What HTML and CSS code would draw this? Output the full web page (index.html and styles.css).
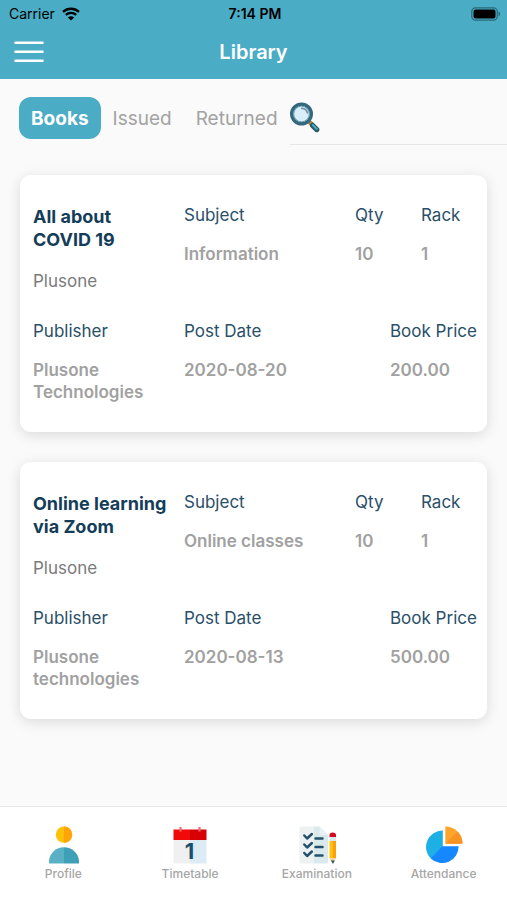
FILE: index.html
```html
<!DOCTYPE html>
<html lang="en">
<head>
<meta charset="utf-8">
<meta name="viewport" content="width=device-width, initial-scale=1">
<title>Library</title>
<link rel="stylesheet" href="styles.css">
</head>
<body>
<header class="header">
  <div class="status">
    <div class="carrier">
      <span>Carrier</span>
      <svg width="18" height="14" viewBox="0 0 18 14" aria-hidden="true">
        <path d="M1 4.8C5.6.7 12.4.7 17 4.8M3.8 7.9c3-2.6 7.4-2.6 10.4 0" fill="none" stroke="#000" stroke-width="2.3"/>
        <path d="M9 13.6 5.9 10.4c1.8-1.5 4.4-1.5 6.2 0z"/>
      </svg>
    </div>
    <span class="clock">7:14 PM</span>
    <svg class="battery" width="30" height="14" viewBox="0 0 30 14" aria-hidden="true">
      <rect x=".8" y=".8" width="25.4" height="12.4" rx="3.6" fill="none" stroke="#286a7a" stroke-width="1.2"/>
      <rect x="2.5" y="2.5" width="22" height="9" rx="2"/>
      <path d="M27.5 4.8c2.2.7 2.2 3.7 0 4.4z" fill="#286a7a"/>
    </svg>
  </div>
  <div class="navbar">
    <button class="menu" type="button" aria-label="Menu">
      <svg width="30" height="22" viewBox="0 0 30 22" aria-hidden="true">
        <path d="M1.5 1.8h27M1.5 10.8h27M1.5 19.8h27" stroke="#fff" stroke-width="2.6" stroke-linecap="round"/>
      </svg>
    </button>
    <h1 class="title">Library</h1>
  </div>
</header>

<main class="content">
  <div class="toolbar">
    <nav class="tabs">
      <button class="tab tab-active" type="button">Books</button>
      <button class="tab" type="button">Issued</button>
      <button class="tab" type="button">Returned</button>
    </nav>
    <div class="search">
      <label class="search-icon" for="search">
        <svg width="32" height="32" viewBox="0 0 32 32" aria-hidden="true">
          <path d="m19.5 21 3 3" stroke="#6b6460" stroke-width="4"/>
          <path d="m20 21.5 2.3 2.3" stroke="#d3892f" stroke-width="4"/>
          <path d="m22.5 24.3 4.3 4.3" stroke="#28596a" stroke-width="5.2" stroke-linecap="round"/>
          <path d="m22.8 24 4 4" stroke="#49a6b8" stroke-width="2" stroke-linecap="round"/>
          <circle cx="11.5" cy="13" r="9.8" fill="#d8eefa" stroke="#34687c" stroke-width="3.4"/>
          <circle cx="11.5" cy="13" r="7.8" fill="none" stroke="#6da0b2"/>
          <path d="M11.8 7.3c3 .2 5 2 5.6 4.6" fill="none" stroke="#7b94a5" stroke-width="1.8" stroke-linecap="round"/>
        </svg>
      </label>
      <input class="search-input" id="search" type="text" aria-label="Search books">
    </div>
  </div>

  <article class="card">
    <div class="row row-top">
      <div>
        <h2 class="book">All about COVID 19</h2>
        <p class="author">Plusone</p>
      </div>
      <dl class="field"><dt>Subject</dt><dd>Information</dd></dl>
      <dl class="field"><dt>Qty</dt><dd>10</dd></dl>
      <dl class="field"><dt>Rack</dt><dd>1</dd></dl>
    </div>
    <div class="row row-bottom">
      <dl class="field"><dt>Publisher</dt><dd>Plusone Technologies</dd></dl>
      <dl class="field"><dt>Post Date</dt><dd>2020-08-20</dd></dl>
      <dl class="field"><dt>Book Price</dt><dd>200.00</dd></dl>
    </div>
  </article>

  <article class="card">
    <div class="row row-top">
      <div>
        <h2 class="book">Online learning via Zoom</h2>
        <p class="author">Plusone</p>
      </div>
      <dl class="field"><dt>Subject</dt><dd>Online classes</dd></dl>
      <dl class="field"><dt>Qty</dt><dd>10</dd></dl>
      <dl class="field"><dt>Rack</dt><dd>1</dd></dl>
    </div>
    <div class="row row-bottom">
      <dl class="field"><dt>Publisher</dt><dd>Plusone technologies</dd></dl>
      <dl class="field"><dt>Post Date</dt><dd>2020-08-13</dd></dl>
      <dl class="field"><dt>Book Price</dt><dd>500.00</dd></dl>
    </div>
  </article>
</main>

<nav class="tabbar">
  <a class="item" href="#profile">
    <svg width="38" height="38" viewBox="0 0 38 38" aria-hidden="true">
      <circle cx="20" cy="8.6" r="8.2" fill="#ffc107"/>
      <path d="M20 .4a8.2 8.2 0 0 1 0 16.4z" fill="#ffa408"/>
      <path d="M5 37.5v-2a15 14.5 0 0 1 15-14.3v16.3z" fill="#5ab1c5"/>
      <path d="M35 37.5v-2a15 14.5 0 0 0-15-14.3v16.3z" fill="#3e9fb7"/>
    </svg>
    Profile
  </a>
  <a class="item" href="#timetable">
    <svg width="38" height="38" viewBox="0 0 38 38" aria-hidden="true">
      <path d="M2.500 13H19v24.500H2.500z" fill="#eff0f1"/>
      <path d="M19 13h16.500v24.500H19z" fill="#dcebf4"/>
      <path d="M2.500 3.500H19V14H2.500z" fill="#f00a0a"/>
      <path d="M19 3.500h16.500V14H19z" fill="#d60005"/>
      <path d="M9.500 1v4.500M28.500 1v4.500" stroke="#f06b6b" stroke-width="2.200"/>
      <text class="day" x="18.500" y="33" text-anchor="middle">1</text>
    </svg>
    Timetable
  </a>
  <a class="item" href="#examination">
    <svg width="38" height="38" viewBox="0 0 38 38" aria-hidden="true">
      <path d="M1.500 2q0-1.500 1.500-1.500h12.500v37H3q-1.500 0-1.500-1.500z" fill="#edf1f2"/>
      <path d="M15.500.5h6L30 9v27q0 1.500-1.500 1.500h-13z" fill="#d9e9ec"/>
      <path d="M21.500.5 30 9h-7q-1.500 0-1.500-1.500z" fill="#e8f1f3"/>
      <path d="m6.300 9.500 2.800 3 4.800-4.500M6.300 18.500l2.800 3 4.800-4.500M6.300 27l2.800 3 4.800-4.500M17.500 12.500h7M17.500 21h7M17.500 29.500h7" fill="none" stroke="#24516b" stroke-width="2.500" stroke-linecap="round" stroke-linejoin="round"/>
      <path d="M31.500 11V9q0-2.500 3.250-2.500T38 9v2z" fill="#d50b1d"/>
      <path d="M31.500 11H38v4h-6.500z" fill="#d8e9ef"/>
      <path d="M31.500 15H35v17h-3.500z" fill="#ffc20d"/>
      <path d="M35 15h3v17h-3z" fill="#ff9d0b"/>
      <path d="M31.500 32H38l-1.500 3.500H33z" fill="#efd4a4"/>
      <path d="M32.800 34.500h4L35 38z" fill="#315264"/>
    </svg>
    Examination
  </a>
  <a class="item" href="#attendance">
    <svg width="38" height="38" viewBox="0 0 38 38" aria-hidden="true">
      <path d="M17.800 4.500v16L6 32.800A16.500 16.500 0 0 1 17.800 4.500z" fill="#1cb0e5"/>
      <path d="M17.300 20.200h16.300A16.500 16.500 0 0 1 5.700 32.500z" fill="#1688ff"/>
      <path d="M20.300.5A17.200 17.200 0 0 1 37.500 17.700H20.300z" fill="#ffa52c"/>
      <path d="M32.500 5.500a17.200 17.200 0 0 1 5 12.200H20.300z" fill="#fa9322"/>
    </svg>
    Attendance
  </a>
</nav>
</body>
</html>
```
FILE: styles.css
```css
* {
  box-sizing: border-box;
}

body {
  margin: 0;
  min-height: 100vh;
  display: flex;
  flex-direction: column;
  background: #fafafa;
  font-family: Inter, "Liberation Sans", sans-serif;
}

h1, h2, p, dl, dd {
  margin: 0;
}

button, input {
  margin: 0;
  border: 0;
  padding: 0;
  background: none;
  font: inherit;
}

svg {
  display: block;
  flex: none;
}

.header {
  background: #4bacc6;
  padding-bottom: 8px;
}

.status {
  display: grid;
  grid-template-columns: 1fr auto 1fr;
  align-items: center;
  height: 27px;
  padding: 0 6px 0 9px;
  font-size: 14px;
  color: #000;
}

.carrier {
  display: flex;
  align-items: center;
  gap: 7px;
}

.clock {
  font-weight: 600;
}

.battery {
  justify-self: end;
}

.navbar {
  display: grid;
  grid-template-columns: 1fr auto 1fr;
  align-items: center;
  height: 44px;
  padding: 6px 14px 0;
}

.menu {
  justify-self: start;
}

.title {
  font-size: 20px;
  line-height: 24px;
  font-weight: 600;
  color: #fff;
}

.content {
  flex: 1;
  display: flex;
  flex-direction: column;
  gap: 30px;
  padding: 18px 20px 30px;
}

.toolbar {
  display: flex;
  align-items: flex-start;
  margin: 0 -20px 0 -1px;
}

.tabs {
  display: flex;
}

.tab {
  height: 42px;
  padding: 0 12px;
  border-radius: 12px;
  font-size: 19px;
  color: #a3a3a3;
}

.tab-active {
  background: #4bacc6;
  color: #fff;
  font-weight: 700;
}

.search {
  flex: 1;
  min-width: 0;
  display: flex;
  align-items: center;
  height: 48px;
  padding-bottom: 8px;
  border-bottom: 1px solid #e6e6e6;
}

.search-input {
  flex: 1;
  min-width: 0;
  height: 32px;
  font-size: 16px;
  outline: none;
}

.card {
  padding: 29px 13px;
  border-radius: 11px;
  background: #fff;
  box-shadow: 0 3px 14px rgba(0, 0, 0, 0.13);
}

.row {
  display: grid;
}

.row-top {
  grid-template-columns: 151fr 171fr 66fr 53fr;
}

.row-bottom {
  grid-template-columns: 151fr 206fr minmax(0, 84fr);
  margin-top: 28px;
}

.book {
  margin-top: 1px;
  padding-right: 14px;
  font-size: 18px;
  line-height: 23px;
  font-weight: 700;
  color: #143d59;
}

.author {
  margin-top: 19px;
  font-size: 17px;
  line-height: 22px;
  color: #7b7b7b;
}

.field {
  font-size: 17px;
  line-height: 22px;
  white-space: nowrap;
}

.field dt {
  color: #294f69;
}

.field dd {
  margin-top: 17px;
  font-weight: 600;
  color: #a1a1a1;
  white-space: normal;
}

.tabbar {
  display: grid;
  grid-template-columns: repeat(4, 1fr);
  height: 94px;
  padding-top: 19px;
  border-top: 1px solid #e8e8e8;
  background: #fff;
}

.item {
  display: flex;
  flex-direction: column;
  align-items: center;
  gap: 2px;
  font-size: 12px;
  line-height: 16px;
  font-weight: 500;
  color: #a6a6a6;
  text-decoration: none;
}

.day {
  font-size: 22px;
  font-weight: 700;
  fill: #1d506c;
}
```
